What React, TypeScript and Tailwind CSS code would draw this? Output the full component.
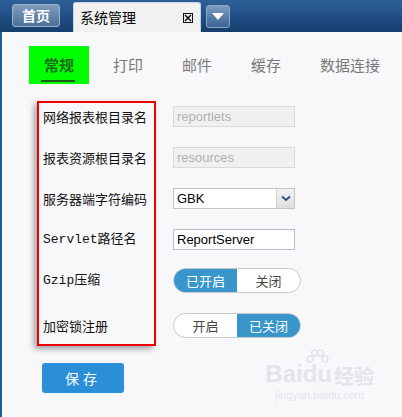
import React from 'react';

const cjk = { fontFamily: '"Noto Sans CJK SC", "Noto Sans", sans-serif' };
const label = { fontFamily: '"Liberation Mono", "Noto Sans CJK SC", monospace' };
const latin = { fontFamily: '"Liberation Sans", "Noto Sans CJK SC", sans-serif' };

const tabs = ['常规', '打印', '邮件', '缓存', '数据连接'];

const Toggle: React.FC<{ on: boolean; left: string; right: string }> = ({ on, left, right }) => (
  <div className="flex h-[25px] w-[128px] overflow-hidden rounded-full border border-[#c9c9c9] bg-white text-[13px]" style={cjk}>
    <div className={`flex w-1/2 items-center justify-center ${on ? 'bg-[#3996cb] text-white' : 'text-[#444]'}`}>{left}</div>
    <div className={`flex w-1/2 items-center justify-center ${on ? 'text-[#444]' : 'bg-[#3996cb] text-white'}`}>{right}</div>
  </div>
);

export default function App() {
  const rows: { name: string; mono?: boolean; field: React.ReactNode }[] = [
    {
      name: '网络报表根目录名',
      field: (
        <div className="flex h-[21px] w-[122px] items-center border border-[#d9d9d9] bg-[#f0f0f0] px-[3px] text-[13px] text-[#b0b0b0]" style={latin}>reportlets</div>
      ),
    },
    {
      name: '报表资源根目录名',
      field: (
        <div className="flex h-[21px] w-[122px] items-center border border-[#d9d9d9] bg-[#f0f0f0] px-[3px] text-[13px] text-[#b0b0b0]" style={latin}>resources</div>
      ),
    },
    {
      name: '服务器端字符编码',
      field: (
        <div className="flex h-[21px] w-[122px] border border-[#c4c4c4] bg-white text-[13px] text-black" style={latin}>
          <div className="flex flex-1 items-center px-[3px]">GBK</div>
          <div className="flex w-[18px] items-center justify-center border-l border-[#d0d0d0] bg-gradient-to-b from-[#f2f2f2] to-[#dedede]">
            <svg width="10" height="7" viewBox="0 0 10 7"><path d="M1 1.5 L5 5 L9 1.5" fill="none" stroke="#2c4f8a" strokeWidth="2" /></svg>
          </div>
        </div>
      ),
    },
    {
      name: 'Servlet路径名',
      mono: true,
      field: (
        <div className="flex h-[21px] w-[122px] items-center border border-[#b9bccb] bg-white px-[3px] text-[13px] text-black" style={latin}>ReportServer</div>
      ),
    },
    { name: 'Gzip压缩', mono: true, field: <Toggle on left="已开启" right="关闭" /> },
    { name: '加密锁注册', field: <Toggle on={false} left="开启" right="已关闭" /> },
  ];

  return (
    <div className="flex h-[417px] w-[402px] flex-col overflow-hidden bg-[#f8f8fb]" style={cjk}>
      {/* top bar */}
      <div className="flex h-[32px] shrink-0 items-end bg-gradient-to-b from-[#2e6098] via-[#214f85] to-[#163e6e] pl-[12px]">
        <div className="mb-[5px] flex h-[23px] w-[48px] items-center justify-center rounded-[3px] border border-[#9fb3cc] bg-gradient-to-b from-[#7f9bbd] to-[#4d7099] text-[14px] font-bold text-white">
          首页
        </div>
        <div className="ml-[13px] flex h-[30px] w-[128px] items-center justify-between rounded-t-[3px] border border-b-0 border-[#c9d4e2] bg-[#f1f1f0] pl-[6px] pr-[7px] text-[14px] text-black">
          <span>系统管理</span>
          <span className="flex h-[10px] w-[10px] items-center justify-center border border-[#111]">
            <svg width="8" height="8" viewBox="0 0 8 8"><path d="M1 1 L7 7 M7 1 L1 7" stroke="#111" strokeWidth="1.5" /></svg>
          </span>
        </div>
        <div className="mb-[4px] ml-[5px] flex h-[23px] w-[24px] items-center justify-center rounded-[3px] border border-[#8ea6c4] bg-gradient-to-b from-[#7c9cc2] via-[#5a7fab] to-[#3b6394]">
          <svg width="12" height="7" viewBox="0 0 12 7"><path d="M0 0 L12 0 L6 7 Z" fill="#fff" /></svg>
        </div>
      </div>

      {/* body */}
      <div className="flex flex-1 flex-col border-l-2 border-[#1f5a98]">
        <div className="flex pl-[27px] pt-[14px]">
          {tabs.map((t, i) => (
            <div
              key={t}
              className={`relative flex h-[38px] items-center justify-center px-[15px] text-[15px] ${i > 0 ? 'ml-[9px] text-[#7a7a7a]' : 'bg-[#00ff00] font-bold text-[#1a6e1a]'}`}
            >
              {t}
              {i === 0 && <div className="absolute bottom-[2px] left-[12px] h-[2px] w-[34px] bg-[#1d5a1d]" />}
            </div>
          ))}
        </div>

        <div className="relative mt-[12px] flex flex-col pl-[41px]">
          {rows.map((r, i) => (
            <div key={r.name} className={`flex h-[41px] items-center ${i === 5 ? 'mt-[4px]' : ''}`}>
              <div className="w-[130px] text-[13px] text-[#111]" style={r.mono ? label : cjk}>{r.name}</div>
              {r.field}
            </div>
          ))}
          {/* highlight annotation */}
          <div className="absolute left-[35px] top-[5px] h-[245px] w-[119px] border-2 border-[#ee0000] shadow-[-3px_3px_6px_rgba(0,0,0,0.35)]" />
        </div>

        <div className="flex items-start justify-between pl-[40px] pr-[28px] pt-[17px]">
          <div className="flex h-[30px] w-[82px] items-center justify-center rounded-[3px] bg-[#2b8fd7] text-[14px] tracking-[4px] text-white">
            保存
          </div>
          {/* watermark */}
          <div className="-mt-[1px] flex flex-col items-center text-[#e4e4ea]" style={latin}>
            <div className="flex items-end text-[24px] font-bold leading-none">
              <span>Bai</span>
              <span className="relative">
                <svg className="absolute -top-[13px] left-[2px]" width="24" height="15" viewBox="0 0 24 15">
                  <circle cx="5" cy="10" r="3" fill="none" stroke="#e2e2e8" strokeWidth="1.5" />
                  <circle cx="9.5" cy="4" r="3" fill="none" stroke="#e2e2e8" strokeWidth="1.5" />
                  <circle cx="15.5" cy="4" r="3" fill="none" stroke="#e2e2e8" strokeWidth="1.5" />
                  <circle cx="20" cy="10" r="3" fill="none" stroke="#e2e2e8" strokeWidth="1.5" />
                </svg>
                du
              </span>
              <span className="ml-[2px] text-[20px]" style={cjk}>经验</span>
            </div>
            <div className="mt-[4px] text-[11px] leading-none">jingyan.baidu.com</div>
          </div>
        </div>
      </div>
    </div>
  );
}
